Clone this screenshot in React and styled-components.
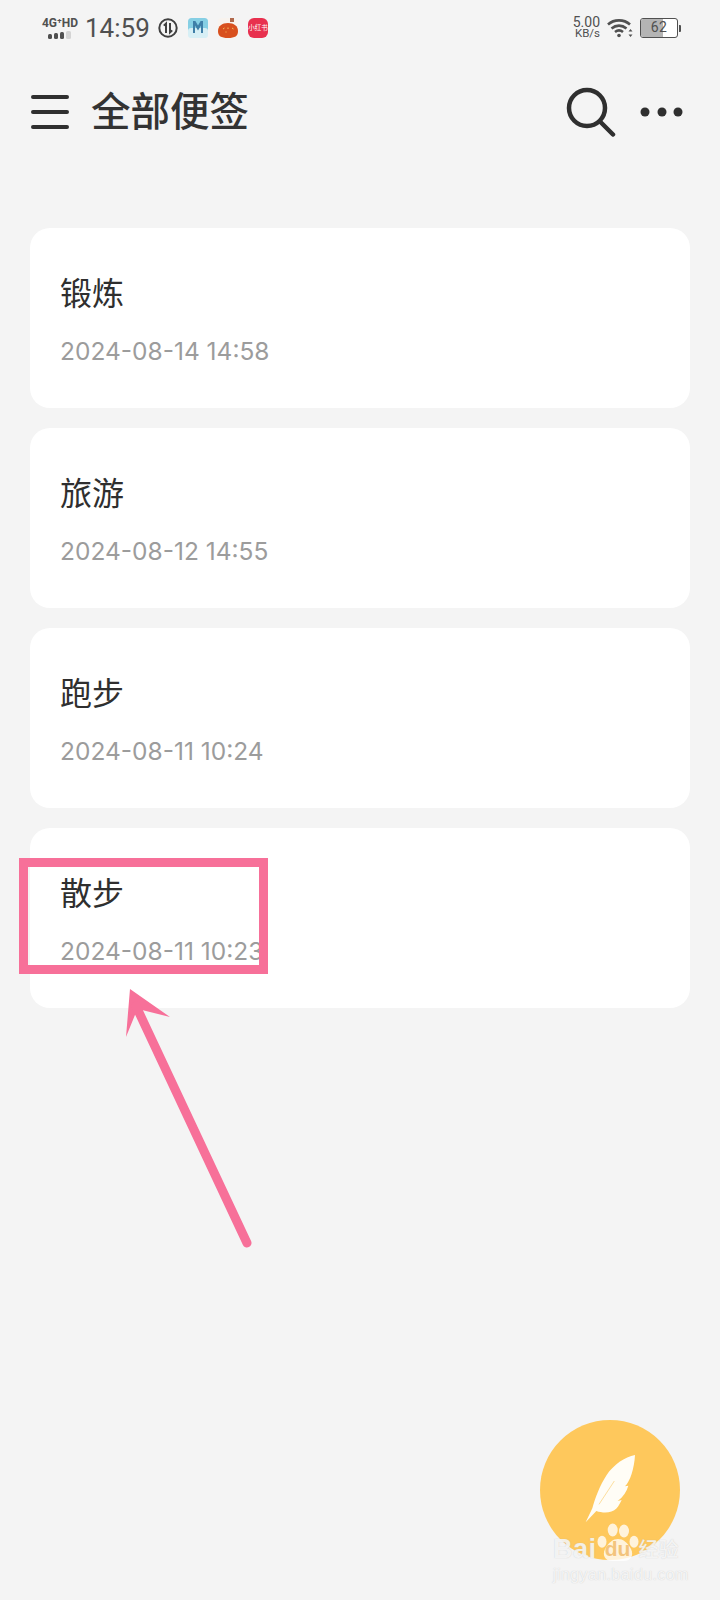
import React from "react";
import styled, { createGlobalStyle } from "styled-components";

const GlobalStyle = createGlobalStyle`
  html, body {
    margin: 0;
    padding: 0;
    background: #f4f4f4;
  }
`;

const SANS = `"Roboto", "Noto Sans CJK SC", sans-serif`;
const PINK = "#f77099";

const Page = styled.div`
  position: relative;
  width: 720px;
  height: 1600px;
  overflow: hidden;
  background: #f4f4f4;
  font-family: ${SANS};
  color: #333;
`;

const StatusBar = styled.div`
  display: flex;
  align-items: center;
  justify-content: space-between;
  height: 56px;
  padding: 0 39px 0 42px;
  color: #505050;
`;

const StatusGroup = styled.div`
  display: flex;
  align-items: center;
`;

const NetworkBox = styled.div`
  display: flex;
  flex-direction: column;
  align-items: center;
  width: 36px;
  margin-right: 7px;
`;

const NetworkLabel = styled.div`
  font-size: 12px;
  line-height: 12px;
  margin-bottom: 2px;
  font-weight: 700;
  white-space: nowrap;
`;

const Time = styled.div`
  font-size: 26px;
  line-height: 30px;
  width: 66px;
  margin-right: 7px;
`;

const AppIcon = styled.div`
  display: flex;
  width: 20px;
  height: 20px;
  margin-right: 10px;
`;

const RedBadge = styled.div`
  width: 20px;
  height: 20px;
  border-radius: 6px;
  background: #e8304e;
  color: #fff;
  font-size: 6.5px;
  line-height: 20px;
  text-align: center;
  white-space: nowrap;
`;

const Speed = styled.div`
  display: flex;
  flex-direction: column;
  align-items: flex-end;
  width: 27px;
  margin-right: 7px;
  font-size: 14px;
  line-height: 11px;
`;

const SpeedUnit = styled.span`
  font-size: 11.5px;
`;

const Battery = styled.div`
  position: relative;
  box-sizing: border-box;
  width: 38px;
  height: 20px;
  margin-left: 7px;
  border: 1.5px solid #505050;
  border-radius: 3px;
  overflow: hidden;
  background: #fff;
`;

const BatteryFill = styled.div`
  width: ${props => props.$level}%;
  height: 100%;
  background: #b4b4b4;
`;

const BatteryText = styled.div`
  position: absolute;
  inset: 0;
  text-align: center;
  font-size: 14px;
  line-height: 17px;
  letter-spacing: 0.5px;
`;

const BatteryTip = styled.div`
  width: 2px;
  height: 7px;
  margin-left: 1px;
  border-radius: 0 1px 1px 0;
  background: #505050;
`;

const Header = styled.div`
  display: flex;
  align-items: center;
  height: 112px;
  padding: 0 36px 0 29px;
`;

const Title = styled.h1`
  flex: 1;
  margin: 2px 0 0 20px;
  font-size: 39.5px;
  line-height: 50px;
  font-weight: 500;
`;

const IconButton = styled.button`
  display: flex;
  margin-left: ${props => props.$gap || 0}px;
  padding: 0;
  border: 0;
  background: none;
  color: #2f2f2f;
`;

const NoteList = styled.div`
  display: flex;
  flex-direction: column;
  gap: 20px;
  margin-top: 60px;
  padding: 0 30px;
`;

const NoteCard = styled.div`
  display: flex;
  flex-direction: column;
  height: 180px;
  box-sizing: border-box;
  padding: 44px 30px 0;
  border-radius: 20px;
  background: #fff;
`;

const NoteTitle = styled.div`
  font-size: 32px;
  line-height: 44px;
  color: #2f2f2f;
`;

const NoteDate = styled.div`
  margin-top: 19px;
  font-family: "Inter", sans-serif;
  font-size: 24.5px;
  line-height: 32px;
  color: #9c9c9c;
  white-space: nowrap;
`;

const Highlight = styled.div`
  position: absolute;
  left: 19px;
  top: 858px;
  width: 249px;
  height: 116px;
  box-sizing: border-box;
  border: 9px solid ${PINK};
`;

const Arrow = styled.svg`
  position: absolute;
  left: 120px;
  top: 980px;
`;

const Fab = styled.div`
  position: absolute;
  left: 540px;
  top: 1420px;
  width: 140px;
  height: 140px;
  border-radius: 50%;
  background: #fec85c;
`;

const FeatherMark = styled.svg`
  position: absolute;
  left: 35px;
  top: 25px;
`;

const Watermark = styled.div`
  position: absolute;
  left: 553px;
  top: 1523px;
  color: rgba(255, 255, 255, 0.78);
  text-shadow: 0 0 1px rgba(170, 170, 170, 0.6);
`;

const BrandRow = styled.div`
  display: flex;
  align-items: flex-end;
  height: 39px;
  font-family: "Liberation Sans", sans-serif;
  font-size: 27px;
  line-height: 26px;
  font-weight: 700;
  letter-spacing: 0.5px;
  white-space: nowrap;
`;

const PawBox = styled.div`
  position: relative;
  width: 42px;
  height: 39px;
`;

const PawSvg = styled.svg`
  position: absolute;
  inset: 0;
`;

const PawText = styled.span`
  position: absolute;
  left: 0;
  right: 0;
  bottom: 3px;
  text-align: center;
  font-size: 21px;
  line-height: 20px;
  letter-spacing: 0;
  color: #f3c47c;
  text-shadow: none;
`;

const BrandCjk = styled.span`
  font-family: ${SANS};
  font-size: 20px;
  line-height: 24px;
  font-weight: 500;
  letter-spacing: 0;
`;

const SiteLine = styled.div`
  margin-top: 5px;
  font-family: "Liberation Sans", sans-serif;
  font-size: 16px;
  line-height: 16px;
  letter-spacing: 0.4px;
  white-space: nowrap;
`;

const notes = [
  { title: "锻炼", date: "2024-08-14 14:58" },
  { title: "旅游", date: "2024-08-12 14:55" },
  { title: "跑步", date: "2024-08-11 10:24" },
  { title: "散步", date: "2024-08-11 10:23" },
];

const SignalBars = () => (
  <svg width="24" height="8" viewBox="0 0 24 8">
    <rect x="0" y="3" width="4" height="5" rx="1.5" fill="#505050" />
    <rect x="6" y="2" width="4" height="6" rx="1.5" fill="#505050" />
    <rect x="12" y="1" width="4" height="7" rx="1.5" fill="#505050" />
    <rect x="18" y="0" width="5" height="8" rx="1.5" fill="#d4d4d4" />
  </svg>
);

const DataIcon = () => (
  <svg width="20" height="20" viewBox="0 0 20 20" fill="none" stroke="#404040">
    <circle cx="10" cy="10" r="8.7" strokeWidth="2" />
    <path d="M8 15V5.500L5.800 7.600M12 5v9.500l2.200-2.100" strokeWidth="2" />
  </svg>
);

const MIcon = () => (
  <svg width="20" height="20" viewBox="0 0 20 20">
    <rect width="20" height="15" rx="3.500" fill="#86cfe4" />
    <rect y="10" width="20" height="10" rx="3" fill="#d7eff5" />
    <path d="M5 15V3h2.400L10 7.500 12.600 3H15v12h-2V7.500l-3 5-3-5V15z" fill="#3f7fa8" />
  </svg>
);

const PumpkinIcon = () => (
  <svg width="20" height="20" viewBox="0 0 20 20">
    <rect width="20" height="20" rx="4" fill="#f8f3ee" />
    <rect x="12" y="0" width="4" height="4" fill="#b0694c" />
    <path d="M0 13c0-5 4-8 10-8s10 3 10 8c0 5-3 7-10 7S0 18 0 13z" fill="#d8501e" />
    <path d="M5 11l1.500-1M10 9.500V11M14 10l1.500 1M7.500 14h1" stroke="#f7bf5c" strokeWidth="1" />
  </svg>
);

const WifiIcon = () => (
  <svg width="26" height="20" viewBox="0 0 26 20" fill="none" stroke="#505050">
    <path d="M1 6.500C7 1 17 1 23 6.500" strokeWidth="2.600" />
    <path d="M4.500 10.500c4.500-3.800 10.500-3.800 15 0" strokeWidth="2.600" />
    <path d="M8 14c2.800-2.200 5.200-2.200 8 0" strokeWidth="2.600" />
    <circle cx="12" cy="17.500" r="1.800" fill="#505050" stroke="none" />
    <path d="M23.500 11l-2 2.500h4zM23.500 19l-2-2.500h4z" fill="#505050" stroke="none" />
  </svg>
);

const MenuIcon = () => (
  <svg width="42" height="38" viewBox="0 0 42 38" fill="none" stroke="currentColor" strokeWidth="4" strokeLinecap="round">
    <path d="M4 4h34M4 19h34M4 34h34" />
  </svg>
);

const SearchIcon = () => (
  <svg width="50" height="50" viewBox="0 0 50 50" fill="none" stroke="currentColor" strokeWidth="4.500" strokeLinecap="round">
    <circle cx="21" cy="21" r="18" />
    <path d="M34.500 35 47 47.500" />
  </svg>
);

const MoreIcon = () => (
  <svg width="44" height="10" viewBox="0 0 44 10" fill="currentColor">
    <circle cx="5" cy="5" r="4.500" />
    <circle cx="22" cy="5" r="4.500" />
    <circle cx="38" cy="5" r="4.500" />
  </svg>
);

const FeatherIcon = () => (
  <FeatherMark width="70" height="90" viewBox="0 0 210 270">
    <path
      d="M180 30C150 35 115 60 95 90 75 120 60 160 52 190L32 232 64 198C85 205 110 205 125 190 132 182 136 172 140 165L128 168C145 155 155 140 160 122L150 124C165 110 178 70 180 30Z"
      fill="#fffdf6"
    />
    <path d="M118 108 72 178" stroke="#fddf9f" strokeWidth="3" fill="none" />
  </FeatherMark>
);

const App = () => (
  <Page>
    <GlobalStyle />
    <StatusBar>
      <StatusGroup>
        <NetworkBox>
          <NetworkLabel>4G⁺HD</NetworkLabel>
          <SignalBars />
        </NetworkBox>
        <Time>14:59</Time>
        <AppIcon><DataIcon /></AppIcon>
        <AppIcon><MIcon /></AppIcon>
        <AppIcon><PumpkinIcon /></AppIcon>
        <AppIcon><RedBadge>小红书</RedBadge></AppIcon>
      </StatusGroup>
      <StatusGroup>
        <Speed>
          5.00
          <SpeedUnit>KB/s</SpeedUnit>
        </Speed>
        <WifiIcon />
        <Battery>
          <BatteryFill $level={60} />
          <BatteryText>62</BatteryText>
        </Battery>
        <BatteryTip />
      </StatusGroup>
    </StatusBar>

    <Header>
      <IconButton><MenuIcon /></IconButton>
      <Title>全部便签</Title>
      <IconButton><SearchIcon /></IconButton>
      <IconButton $gap={24}><MoreIcon /></IconButton>
    </Header>

    <NoteList>
      {notes.map(note => (
        <NoteCard key={note.title}>
          <NoteTitle>{note.title}</NoteTitle>
          <NoteDate>{note.date}</NoteDate>
        </NoteCard>
      ))}
    </NoteList>

    <Highlight />
    <Arrow width="140" height="270" viewBox="0 0 140 270" fill="none">
      <path d="M10 9 50 37 22 30 17 30 6 57Z" fill={PINK} />
      <path d="M16 26 127 263" stroke={PINK} strokeWidth="9" strokeLinecap="round" />
    </Arrow>

    <Fab><FeatherIcon /></Fab>
    <Watermark>
      <BrandRow>
        Bai
        <PawBox>
          <PawSvg width="42" height="39" viewBox="0 0 42 39" fill="currentColor">
            <ellipse cx="15.700" cy="7" rx="5" ry="6.500" />
            <ellipse cx="27" cy="8" rx="5" ry="6.500" />
            <ellipse cx="5" cy="18.700" rx="4.500" ry="6" />
            <ellipse cx="37" cy="18.700" rx="4.500" ry="6" />
            <path d="M21 16c5 0 9 3 13 10 3 6 0 12-7 12H15c-7 0-10-6-7-12 4-7 8-10 13-10z" />
          </PawSvg>
          <PawText>du</PawText>
        </PawBox>
        <BrandCjk>经验</BrandCjk>
      </BrandRow>
      <SiteLine>jingyan.baidu.com</SiteLine>
    </Watermark>
  </Page>
);

export default App;
